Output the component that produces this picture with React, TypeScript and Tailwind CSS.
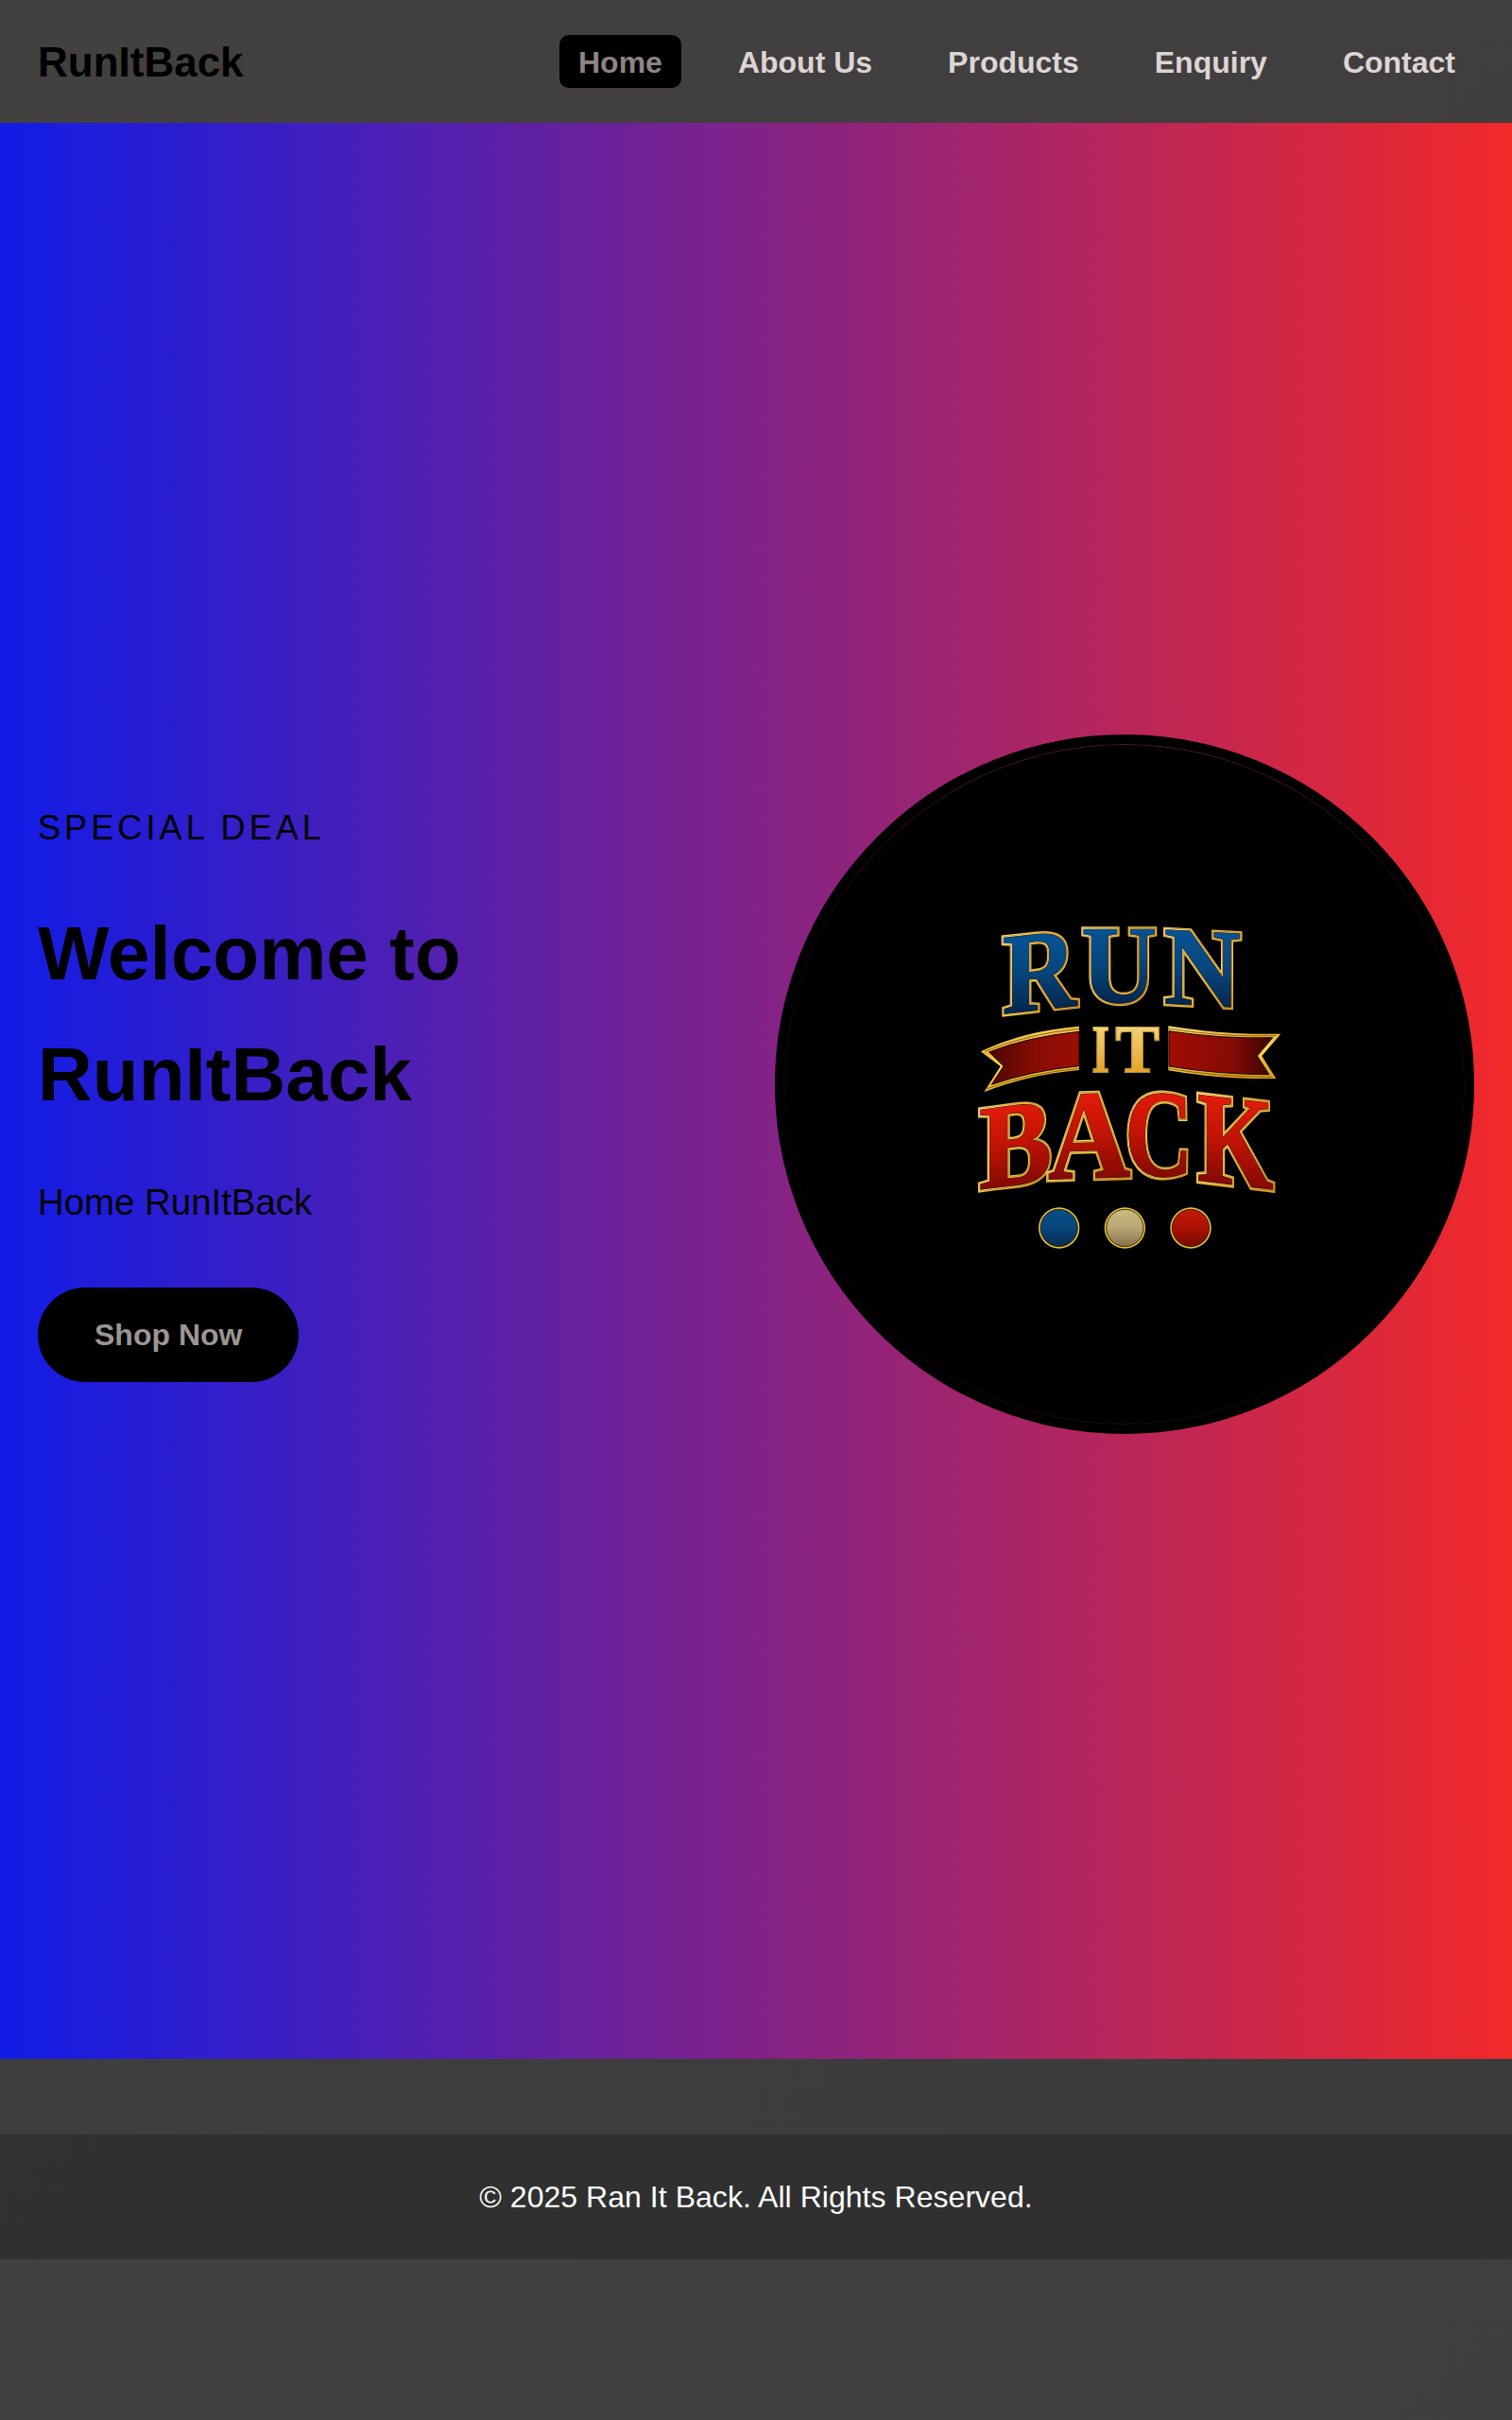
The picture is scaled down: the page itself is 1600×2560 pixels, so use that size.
import React from "react";

type GlyphProps = {
  char: string;
  id: string;
  // left, width, top and height of the letter including its gold edge
  box: [number, number, number, number];
  // glyph extents in 1/1000 em: left, right, bottom, top
  ext: [number, number, number, number];
  slope?: number;
  fill: string;
  // stroke that thickens the face, and the full stroke with the edging
  weight?: number;
  edge?: number;
};

const SIZE = 400;

function Glyph({ char, id, box, ext, slope = 0, fill, weight = 3, edge = 22 }: GlyphProps) {
  const [l, r, b, t] = ext;
  const inset = edge / 2;
  const x = box[0] + inset;
  const w = box[1] - edge;
  const y = box[2] + inset;
  const h = box[3] - edge;
  const sx = w / (((r - l) * SIZE) / 1000);
  const sy = h / (((t - b) * SIZE) / 1000);
  const base = y + h + (b * SIZE * sy) / 1000;
  const dx = x - (l * SIZE * sx) / 1000;
  const rest = edge - weight;
  return (
    <g transform={`matrix(${sx} ${slope * sx} 0 ${sy} ${dx} ${base})`} strokeMiterlimit={4}>
      <defs>
        <text id={id} fontSize={SIZE} fontWeight="700" fontFamily="'Liberation Serif', serif">
          {char}
        </text>
      </defs>
      <use href={`#${id}`} fill="url(#gold)" stroke="url(#gold)" strokeWidth={edge} />
      <use href={`#${id}`} fill="none" stroke="#a06c18" strokeWidth={weight + rest * 0.6} />
      <use href={`#${id}`} fill="none" stroke="url(#goldInner)" strokeWidth={weight + rest * 0.5} />
      <use href={`#${id}`} fill="none" stroke="#170c10" strokeWidth={weight + rest * 0.14} />
      <use href={`#${id}`} fill={fill} stroke={fill} strokeWidth={weight} />
    </g>
  );
}

function Emblem() {
  return (
    <svg viewBox="-510 -489 2160 2160" className="block size-full bg-black" role="img" aria-label="Run It Back">
      <defs>
        <linearGradient id="gold" x1="0" y1="0" x2="0.3" y2="1">
          <stop offset="0" stopColor="#ffe680" />
          <stop offset="0.4" stopColor="#ecb83a" />
          <stop offset="0.65" stopColor="#fad850" />
          <stop offset="1" stopColor="#dca424" />
        </linearGradient>
        <linearGradient id="goldInner" x1="0" y1="0" x2="1" y2="0.4">
          <stop offset="0" stopColor="#fff0b0" />
          <stop offset="0.5" stopColor="#f4c658" />
          <stop offset="1" stopColor="#d8962c" />
        </linearGradient>
        <linearGradient id="blue" x1="0" y1="0" x2="0" y2="1">
          <stop offset="0.2" stopColor="#075394" />
          <stop offset="0.5" stopColor="#07467e" />
          <stop offset="0.85" stopColor="#032349" />
        </linearGradient>
        <linearGradient id="red" x1="0" y1="0" x2="0" y2="1">
          <stop offset="0.2" stopColor="#e21b08" />
          <stop offset="0.5" stopColor="#c01305" />
          <stop offset="0.85" stopColor="#7c0904" />
        </linearGradient>
        <linearGradient id="cream" x1="0" y1="0" x2="0" y2="1">
          <stop offset="0.2" stopColor="#f5d27a" />
          <stop offset="0.8" stopColor="#e3a62d" />
        </linearGradient>
        <linearGradient id="ribbonLeft">
          <stop offset="0" stopColor="#4e0603" />
          <stop offset="0.5" stopColor="#860c04" />
          <stop offset="1" stopColor="#9c0e05" />
        </linearGradient>
        <linearGradient id="ribbonRight">
          <stop offset="0" stopColor="#a20d04" />
          <stop offset="0.6" stopColor="#850b04" />
          <stop offset="1" stopColor="#3c0402" />
        </linearGradient>
        <linearGradient id="dotBlue" x1="0" y1="0" x2="0" y2="1">
          <stop offset="0" stopColor="#0a4d88" />
          <stop offset="0.5" stopColor="#08457b" />
          <stop offset="1" stopColor="#062c52" />
        </linearGradient>
        <linearGradient id="dotCream" x1="0" y1="0" x2="0" y2="1">
          <stop offset="0" stopColor="#cdbb82" />
          <stop offset="0.5" stopColor="#b8a674" />
          <stop offset="1" stopColor="#85714b" />
        </linearGradient>
        <linearGradient id="dotRed" x1="0" y1="0" x2="0" y2="1">
          <stop offset="0" stopColor="#c01a08" />
          <stop offset="0.5" stopColor="#ad1004" />
          <stop offset="1" stopColor="#740a03" />
        </linearGradient>
        <linearGradient id="rim" x1="0" y1="0" x2="0" y2="1">
          <stop offset="0" stopColor="#7a1c4a" />
          <stop offset="0.3" stopColor="#1c0812" />
          <stop offset="0.7" stopColor="#12050b" />
          <stop offset="1" stopColor="#2c0c1c" />
        </linearGradient>
      </defs>
      <circle cx="570" cy="591" r="1078.5" fill="none" stroke="url(#rim)" strokeWidth="2.2" />

      <Glyph id="g-r" char="R" box={[180, 246, 110, 268]} ext={[26, 715, 0, 676]} slope={-0.11} fill="url(#blue)" />
      <Glyph id="g-u" char="U" box={[428, 248, 83, 264]} ext={[16, 701, -19, 676]} fill="url(#blue)" />
      <Glyph id="g-n" char="N" box={[690, 252, 83, 267]} ext={[16, 701, -18, 676]} slope={0.055} fill="url(#blue)" />

      <path d="M113 487 Q250 421 426 407 L426 546 Q260 561 124 616 L176 534 Z" fill="url(#gold)" />
      <path d="M126 487 Q260 431 426 415 M426 541 Q264 556 134 605" fill="none" stroke="#7a4a08" strokeWidth="2.5" />
      <path d="M140 489 Q260 441 426 424 L426 533 Q270 549 148 592 L186 533 Z" fill="url(#ribbonLeft)" stroke="#170505" strokeWidth="3" />
      <path d="M709 406 Q880 434 1066 431 L1006 501 L1051 573 Q860 574 709 547 Z" fill="url(#gold)" />
      <path d="M709 414 Q880 442 1050 437 M709 541 Q870 568 1040 568" fill="none" stroke="#7a4a08" strokeWidth="2.5" />
      <path d="M711 422 Q880 448 1040 443 L991 501 L1029 560 Q870 560 711 534 Z" fill="url(#ribbonRight)" stroke="#170505" strokeWidth="3" />

      <Glyph id="g-i" char="I" box={[464, 61, 398, 159]} ext={[20, 370, 0, 676]} fill="url(#cream)" weight={2} edge={12} />
      <Glyph id="g-t" char="T" box={[542, 138, 398, 159]} ext={[31, 636, 0, 676]} fill="url(#cream)" weight={2} edge={12} />

      <Glyph id="g-b" char="B" box={[103, 230, 655, 280]} ext={[16, 619, 0, 676]} slope={-0.13} fill="url(#red)" />
      <Glyph id="g-a" char="A" box={[320, 267, 604, 298]} ext={[9, 689, 0, 690]} slope={-0.03} fill="url(#red)" />
      <Glyph id="g-c" char="C" box={[568, 216, 597, 300]} ext={[28, 677, -19, 691]} slope={0.02} fill="url(#red)" />
      <Glyph id="g-k" char="K" box={[799, 251, 606, 300]} ext={[30, 769, 0, 676]} slope={0.12} fill="url(#red)" />

      {[
        [362, "url(#dotBlue)"],
        [571, "url(#dotCream)"],
        [780, "url(#dotRed)"],
      ].map(([cx, fill]) => (
        <g key={cx}>
          <circle cx={cx} cy="1047" r="65" fill="#ecc736" />
          <circle cx={cx} cy="1047" r="59" fill={fill as string} stroke="#1a1208" strokeWidth="2.5" />
        </g>
      ))}
    </svg>
  );
}

const links = ["Home", "About Us", "Products", "Enquiry", "Contact"];

export default function App() {
  return (
    <div className="min-h-[2560px] w-full bg-[linear-gradient(135deg,#434040,#3b3b3b)] bg-[length:100%_2389.6px] font-['Liberation_Sans',Arial,sans-serif] text-[32px] leading-[1.6] text-black">
      <header className="flex items-center justify-between px-10 pt-[31px] pb-[29px]">
        <div className="text-[44px] font-bold">RunItBack</div>
        <nav className="-mt-0.5 flex gap-10">
          {links.map((label, i) => (
            <a
              key={label}
              href="#"
              className={
                i === 0
                  ? "rounded-[10px] bg-black px-5 pt-[11px] pb-[9px] leading-9 font-bold text-[#8c8585]"
                  : "px-5 pt-[11px] pb-[9px] leading-9 font-bold text-[#ddd5d5]"
              }
            >
              {label}
            </a>
          ))}
        </nav>
      </header>

      <main className="grid h-[2048px] grid-cols-2 items-center gap-10 bg-[linear-gradient(90deg,#111ce6,#f22929)] px-10">
        <section className="flex flex-col items-start">
          <p className="mb-10 text-[36px] tracking-[4.1px]">SPECIAL DEAL</p>
          <h1 className="mb-10 text-[80px] font-bold">
            Welcome to
            <br />
            RunItBack
          </h1>
          <p className="mb-[60px] text-[38.4px]">Home RunItBack</p>
          <a href="#" className="rounded-[50px] bg-black px-[60px] pt-[25px] pb-[23px] font-bold text-[#9c9595]">
            Shop Now
          </a>
        </section>
        <div className="pb-3.5">
          <div className="aspect-square w-full overflow-hidden rounded-full border-[10px] border-black bg-black">
            <Emblem />
          </div>
        </div>
      </main>

      <footer className="mt-20 bg-black/20 pt-[41px] pb-[39px] text-center tracking-[0.04px] text-white">
        © 2025 Ran It Back. All Rights Reserved.
      </footer>
    </div>
  );
}
